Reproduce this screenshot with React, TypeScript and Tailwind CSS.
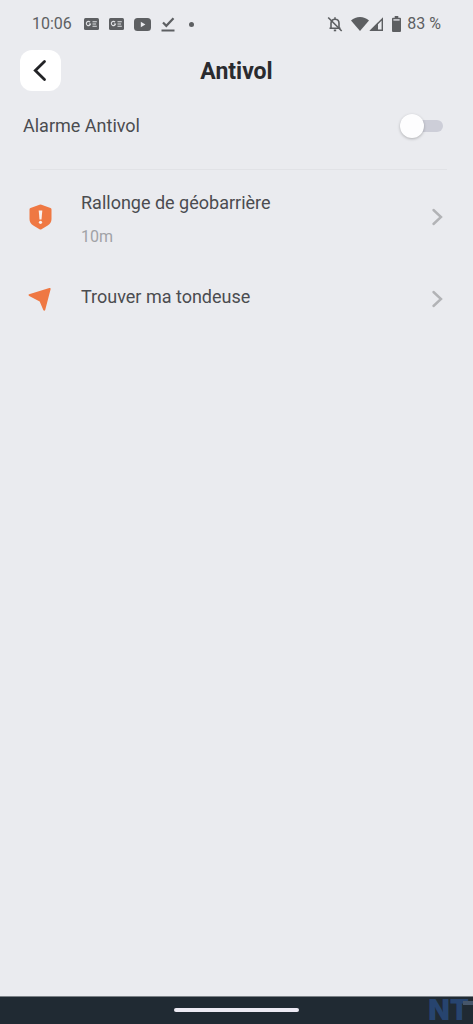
import { useState } from "react";

const NewsIcon = () => (
  <svg width="15" height="12" viewBox="0 0 15 12" aria-hidden="true">
    <rect width="15" height="12" rx="1.5" fill="#5d5f62" />
    <path
      d="M6.1 4.2A2.1 2.1 0 1 0 6.5 6H4.8M8.5 3.8h4.3M8.5 6h3.6M8.5 8.2h4.3"
      fill="none"
      stroke="#e0e1e4"
      strokeWidth="1.1"
    />
  </svg>
);

const StatusBar = () => (
  <div className="flex h-12 items-center justify-between px-8 text-base text-[#5d5f62]">
    <div className="flex items-center">
      <span className="w-13">10:06</span>
      <div className="flex items-center gap-[10px]">
        <NewsIcon />
        <NewsIcon />
        <svg width="17" height="13" viewBox="0 0 17 13" aria-hidden="true">
          <rect width="17" height="13" rx="3.5" fill="#5d5f62" />
          <path d="M6.8 3.8v5.4l4.6-2.7z" fill="#e9eaee" />
        </svg>
        <svg width="14" height="15" viewBox="0 0 14 15" aria-hidden="true">
          <path d="M2 5.5l3.3 3.3L12.500 1.200" fill="none" stroke="#5d5f62" strokeWidth="2.2" />
          <path d="M.5 13.500h13" stroke="#5d5f62" strokeWidth="2" />
        </svg>
        <span className="ml-1 size-[5px] rounded-full bg-[#5d5f62]" />
      </div>
    </div>
    <div className="flex items-center">
      <svg width="16" height="16" viewBox="0 0 16 16" fill="none" stroke="#5d5f62" strokeWidth="1.6" aria-hidden="true">
        <path d="M4 12V7.2C4 5 5.6 3.3 8 3.3S12 5 12 7.2V12M2.5 12.2h11M8 1.2v2" />
        <path d="M1.2 1.500l13.500 13.500" />
        <path d="M6.8 14.4h2.4" strokeWidth="1.8" />
      </svg>
      <svg className="ml-2" width="18" height="14" viewBox="0 0 18 14" aria-hidden="true">
        <path d="M0 3.5C2.5 1.3 5.6 0 9 0s6.500 1.300 9 3.500L9 14z" fill="#5d5f62" />
      </svg>
      <svg width="15" height="14" viewBox="0 0 15 14" aria-hidden="true">
        <path d="M2 13.200H13.300V1.900z" fill="none" stroke="#5d5f62" strokeWidth="1.400" />
        <path d="M1 13.500L9 5.500v8z" fill="#5d5f62" />
      </svg>
      <svg className="ml-2" width="9" height="16" viewBox="0 0 9 16" aria-hidden="true">
        <path d="M2.700 0h3.600v1.700H8a1 1 0 0 1 1 1V15a1 1 0 0 1-1 1H1a1 1 0 0 1-1-1V2.700a1 1 0 0 1 1-1h1.700z" fill="#5d5f62" />
        <path d="M1.400 3h6.200v1.800H1.400z" fill="#c4c5c9" />
      </svg>
      <span className="ml-1.5">83 %</span>
    </div>
  </div>
);

const Chevron = () => (
  <svg width="12" height="18" viewBox="0 0 12 18" aria-hidden="true">
    <path d="M2.500 2l7.500 7-7.500 7" fill="none" stroke="#b2b3b6" strokeWidth="2.400" strokeLinecap="round" />
  </svg>
);

const ShieldIcon = () => (
  <svg width="25" height="26" viewBox="0 0 24 26" aria-hidden="true">
    <path
      d="M11 .7a2.500 2.500 0 0 1 2 0l9 3.300a1.500 1.500 0 0 1 1 1.400V15c0 3-1.300 5-3.800 6.600L13 25.200a2 2 0 0 1-2 0l-6.200-3.600C2.300 20 1 18 1 15V5.400A1.500 1.500 0 0 1 2 4z"
      fill="#ef7843"
    />
    <path d="M10.200 6.500h3.600L13 15.500h-2z" fill="#f8f0ef" />
    <circle cx="12" cy="18.300" r="1.600" fill="#f8f0ef" />
  </svg>
);

const ArrowIcon = () => (
  <svg width="25" height="26" viewBox="0 0 24 26" aria-hidden="true">
    <path
      d="M.6 8.200L20.800 2c.9-.2 1.500.3 1.300 1.200L16.700 24c-.3 1-1.500 1-1.900.1l-3.600-8.500L.7 9.900C-.1 9.500-.2 8.500.6 8.200z"
      fill="#ef7843"
    />
  </svg>
);

export default function App() {
  const [alarm, setAlarm] = useState(false);

  return (
    <div className="flex min-h-screen flex-col bg-[#eaebef] font-[Roboto,sans-serif] text-[#4b4c50]">
      <StatusBar />
      <header className="grid grid-cols-[41px_1fr_41px] items-center px-5 pt-0.5">
        <button type="button" aria-label="Retour" className="flex h-[41px] items-center justify-center rounded-xl bg-white">
          <svg width="16" height="24" viewBox="0 0 16 24" aria-hidden="true">
            <path d="M11.500 2.500L2.300 11.500l9.200 9" fill="none" stroke="#222326" strokeWidth="2.800" strokeLinecap="round" />
          </svg>
        </button>
        <h1 className="pt-0.5 text-center text-[23px] leading-8 font-bold text-[#2a2b2f]">Antivol</h1>
      </header>

      <main className="flex-1">
        <label className="flex h-[70px] items-center justify-between pr-[30px] pl-[23px] text-lg">
          <span>Alarme Antivol</span>
          <span className="relative flex h-6 w-[43px] items-center">
            <input
              type="checkbox"
              role="switch"
              checked={alarm}
              onChange={(e) => setAlarm(e.target.checked)}
              className="peer ml-2 h-3 w-full appearance-none rounded-full bg-[#cdced8] checked:bg-[#ef7843]"
            />
            <span className="pointer-events-none absolute left-0 size-6 rounded-full bg-[#fdfdfe] shadow-[0_1px_3px_rgba(0,0,0,0.25)] peer-checked:translate-x-5" />
          </span>
        </label>
        <hr className="mt-2 mr-[26px] ml-[30px] border-[#e1e2e6]" />
        <button type="button" className="flex h-[94px] w-full items-center pr-[30px] pl-7 text-left">
          <ShieldIcon />
          <span className="ml-7 flex flex-1 flex-col gap-2 pt-1">
            <span className="text-lg leading-7">Rallonge de géobarrière</span>
            <span className="text-base leading-6 text-[#a1a2a6]">10m</span>
          </span>
          <Chevron />
        </button>
        <button type="button" className="flex h-[70px] w-full items-center pr-[30px] pl-7 text-left">
          <ArrowIcon />
          <span className="ml-7 flex-1 pb-1 text-lg leading-7">Trouver ma tondeuse</span>
          <Chevron />
        </button>
      </main>

      <footer className="relative flex h-7 items-center justify-center border-t border-[#7b8187] bg-[#202a33]">
        <div className="mb-0.5 h-1 w-[125px] rounded-full bg-[#eceaf4]" />
        <div className="absolute right-1 bottom-0 font-[Inter,sans-serif] text-[28px] leading-7 font-black text-[#27446f]">
          NT
        </div>
        <div className="absolute top-1 right-0 h-1 w-2.5 bg-[#46566a]" />
      </footer>
    </div>
  );
}
